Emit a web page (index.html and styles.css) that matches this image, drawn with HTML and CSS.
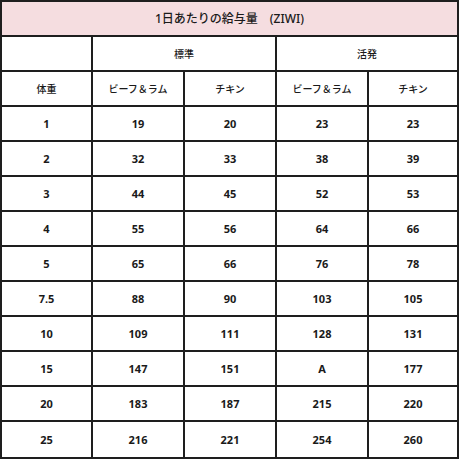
FILE: index.html
```html
<!DOCTYPE html>
<html lang="ja">
<head>
<meta charset="utf-8">
<link rel="stylesheet" href="styles.css">
</head>
<body>
<table class="feed">
  <colgroup>
    <col class="c1"><col class="c2"><col class="c3"><col class="c4"><col class="c5">
  </colgroup>
  <tr class="title-row"><td colspan="5" class="title">1日あたりの給与量　(ZIWI)</td></tr>
  <tr class="row"><td class="label"></td><td colspan="2" class="label">標準</td><td colspan="2" class="label">活発</td></tr>
  <tr class="row"><td class="label">体重</td><td class="label">ビーフ＆ラム</td><td class="label">チキン</td><td class="label">ビーフ＆ラム</td><td class="label">チキン</td></tr>
  <tr class="row"><td>1</td><td>19</td><td>20</td><td>23</td><td>23</td></tr>
  <tr class="row"><td>2</td><td>32</td><td>33</td><td>38</td><td>39</td></tr>
  <tr class="row"><td>3</td><td>44</td><td>45</td><td>52</td><td>53</td></tr>
  <tr class="row"><td>4</td><td>55</td><td>56</td><td>64</td><td>66</td></tr>
  <tr class="row"><td>5</td><td>65</td><td>66</td><td>76</td><td>78</td></tr>
  <tr class="row"><td>7.5</td><td>88</td><td>90</td><td>103</td><td>105</td></tr>
  <tr class="row"><td>10</td><td>109</td><td>111</td><td>128</td><td>131</td></tr>
  <tr class="row"><td>15</td><td>147</td><td>151</td><td>A</td><td>177</td></tr>
  <tr class="row"><td>20</td><td>183</td><td>187</td><td>215</td><td>220</td></tr>
  <tr class="row last"><td>25</td><td>216</td><td>221</td><td>254</td><td>260</td></tr>
</table>
</body>
</html>
```
FILE: styles.css
```css
html, body {
  margin: 0;
  padding: 0;
  background: #ffffff;
}

.feed {
  border-collapse: separate;
  border-spacing: 0;
  table-layout: fixed;
  width: 459px;
  border-top: 2px solid #1e1e1e;
  border-left: 2px solid #1e1e1e;
  font-family: "Noto Sans", "Noto Sans CJK JP", sans-serif;
  font-size: 11px;
  color: #1a1a1a;
}

.c1 { width: 91px; }
.c2 { width: 92px; }
.c3 { width: 92px; }
.c4 { width: 92px; }
.c5 { width: 90px; }

.feed td {
  border-right: 2px solid #1e1e1e;
  border-bottom: 2px solid #1e1e1e;
  padding: 0;
  text-align: center;
  vertical-align: middle;
  font-weight: 700;
  line-height: 1;
}

.feed td.label {
  font-size: 10px;
  font-weight: 500;
}

.title-row { height: 35px; }
.row { height: 35px; }
.row.last { height: 37px; }

.feed td.title {
  background: #f5dde0;
  font-size: 12px;
  font-weight: 500;
}
```
